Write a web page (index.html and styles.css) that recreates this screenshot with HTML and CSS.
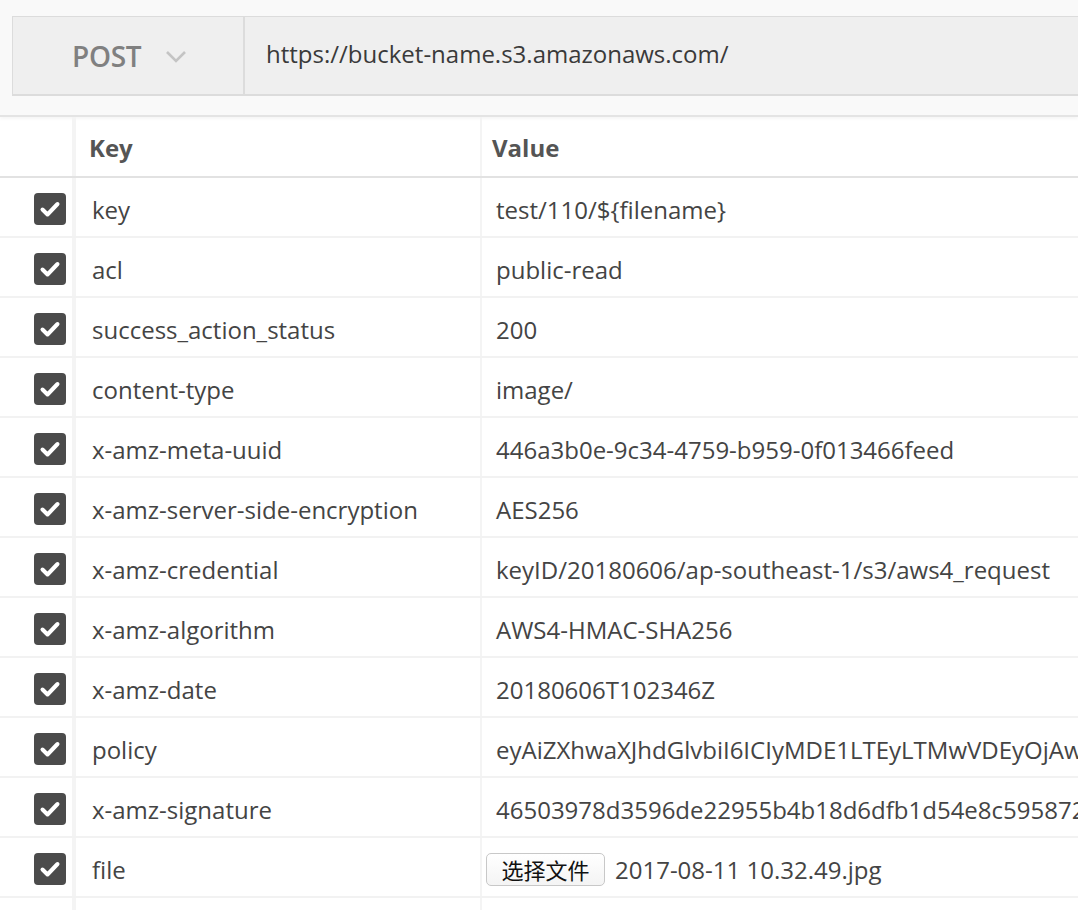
FILE: index.html
```html
<!DOCTYPE html>
<html>
<head>
<meta charset="utf-8">
<link rel="stylesheet" href="styles.css">
</head>
<body>
<div class="topbar">
  <div class="request">
    <div class="method">
      <span class="method-name">POST</span>
      <svg class="chevron" width="22" height="14" viewBox="0 0 22 14"><path d="M2 2 L11 11 L20 2" fill="none" stroke="#c4c4c4" stroke-width="2.6"/></svg>
    </div>
    <div class="url">https://bucket-name.s3.amazonaws.com/</div>
  </div>
</div>
<div class="table">
  <div class="row head">
    <div class="cell check"></div>
    <div class="cell key">Key</div>
    <div class="cell value">Value</div>
  </div>
  <div class="row"><div class="cell check"><span class="cb"><svg viewBox="0 0 32 32"><path d="M8.5 16.5 L13.5 21.5 L23.5 11" /></svg></span></div><div class="cell key">key</div><div class="cell value">test/110/${filename}</div></div>
  <div class="row"><div class="cell check"><span class="cb"><svg viewBox="0 0 32 32"><path d="M8.5 16.5 L13.5 21.5 L23.5 11" /></svg></span></div><div class="cell key">acl</div><div class="cell value">public-read</div></div>
  <div class="row"><div class="cell check"><span class="cb"><svg viewBox="0 0 32 32"><path d="M8.5 16.5 L13.5 21.5 L23.5 11" /></svg></span></div><div class="cell key">success_action_status</div><div class="cell value">200</div></div>
  <div class="row"><div class="cell check"><span class="cb"><svg viewBox="0 0 32 32"><path d="M8.5 16.5 L13.5 21.5 L23.5 11" /></svg></span></div><div class="cell key">content-type</div><div class="cell value">image/</div></div>
  <div class="row"><div class="cell check"><span class="cb"><svg viewBox="0 0 32 32"><path d="M8.5 16.5 L13.5 21.5 L23.5 11" /></svg></span></div><div class="cell key">x-amz-meta-uuid</div><div class="cell value">446a3b0e-9c34-4759-b959-0f013466feed</div></div>
  <div class="row"><div class="cell check"><span class="cb"><svg viewBox="0 0 32 32"><path d="M8.5 16.5 L13.5 21.5 L23.5 11" /></svg></span></div><div class="cell key">x-amz-server-side-encryption</div><div class="cell value">AES256</div></div>
  <div class="row"><div class="cell check"><span class="cb"><svg viewBox="0 0 32 32"><path d="M8.5 16.5 L13.5 21.5 L23.5 11" /></svg></span></div><div class="cell key">x-amz-credential</div><div class="cell value">keyID/20180606/ap-southeast-1/s3/aws4_request</div></div>
  <div class="row"><div class="cell check"><span class="cb"><svg viewBox="0 0 32 32"><path d="M8.5 16.5 L13.5 21.5 L23.5 11" /></svg></span></div><div class="cell key">x-amz-algorithm</div><div class="cell value">AWS4-HMAC-SHA256</div></div>
  <div class="row"><div class="cell check"><span class="cb"><svg viewBox="0 0 32 32"><path d="M8.5 16.5 L13.5 21.5 L23.5 11" /></svg></span></div><div class="cell key">x-amz-date</div><div class="cell value">20180606T102346Z</div></div>
  <div class="row"><div class="cell check"><span class="cb"><svg viewBox="0 0 32 32"><path d="M8.5 16.5 L13.5 21.5 L23.5 11" /></svg></span></div><div class="cell key">policy</div><div class="cell value">eyAiZXhwaXJhdGlvbiI6ICIyMDE1LTEyLTMwVDEyOjAw</div></div>
  <div class="row"><div class="cell check"><span class="cb"><svg viewBox="0 0 32 32"><path d="M8.5 16.5 L13.5 21.5 L23.5 11" /></svg></span></div><div class="cell key">x-amz-signature</div><div class="cell value">46503978d3596de22955b4b18d6dfb1d54e8c595872</div></div>
  <div class="row"><div class="cell check"><span class="cb"><svg viewBox="0 0 32 32"><path d="M8.5 16.5 L13.5 21.5 L23.5 11" /></svg></span></div><div class="cell key">file</div><div class="cell value"><span class="filebtn">选择文件</span><span class="filename">2017-08-11 10.32.49.jpg</span></div></div>
  <div class="row last"><div class="cell check"></div><div class="cell key"></div><div class="cell value"></div></div>
</div>
</body>
</html>
```
FILE: styles.css
```css
html, body {
  margin: 0;
  padding: 0;
  background: #ffffff;
  overflow: hidden;
}
body {
  width: 1078px;
  height: 910px;
  font-family: "Open Sans", "Noto Sans CJK SC", sans-serif;
  color: #444;
}
.topbar {
  background: #f9f9f9;
  height: 117px;
  padding-top: 16px;
  box-sizing: border-box;
  border-bottom: 2px solid #e4e4e4;
  box-shadow: 0 2px 3px rgba(0,0,0,0.04);
  overflow: hidden;
}
.request {
  margin-left: 12px;
  width: 1100px;
  height: 80px;
  box-sizing: border-box;
  border: 1px solid #dcdcdc;
  border-bottom: 2px solid #dcdcdc;
  background: #efefef;
  display: flex;
}
.method {
  width: 232px;
  flex: none;
  border-right: 2px solid #dcdcdc;
  display: flex;
  align-items: center;
  box-sizing: border-box;
  padding-left: 59px;
}
.method-name {
  font-size: 28px;
  font-weight: 600;
  color: #808080;
  letter-spacing: -0.3px;
}
.chevron {
  margin-left: 24px;
  margin-top: 2px;
}
.url {
  display: flex;
  align-items: center;
  padding-left: 21px;
  font-size: 24px;
  color: #3a3a3a;
  padding-bottom: 4px;
}
.table {
  display: flex;
  flex-direction: column;
}
.row {
  display: grid;
  grid-template-columns: 72px 408px 1fr;
  height: 60px;
  flex: none;
  box-sizing: border-box;
  border-bottom: 2px solid #f2f2f2;
}
.row.head {
  height: 61px;
  border-bottom: 2px solid #e2e2e2;
}
.cell {
  display: flex;
  align-items: center;
  white-space: nowrap;
  overflow: hidden;
  font-size: 24px;
  color: #444;
  box-sizing: border-box;
  padding-top: 4px;
}
.cell.check {
  justify-content: flex-end;
  padding-right: 6px;
}
.cell.key {
  border-left: 4px solid #f4f4f4;
  padding-left: 16px;
}
.cell.value {
  border-left: 2px solid #f4f4f4;
  padding-left: 14px;
}
.head .cell {
  font-weight: 700;
  color: #555;
  padding-top: 2px;
}
.head .cell.key {
  padding-left: 13px;
}
.head .cell.value {
  padding-left: 10px;
}
.cb {
  width: 32px;
  height: 32px;
  background: #4b4b4b;
  border-radius: 4px;
  display: block;
}
.cb svg {
  width: 32px;
  height: 32px;
  display: block;
}
.cb path {
  fill: none;
  stroke: #ffffff;
  stroke-width: 4;
  stroke-linecap: round;
  stroke-linejoin: round;
}
.filebtn {
  display: inline-flex;
  align-items: center;
  justify-content: center;
  height: 33px;
  width: 119px;
  box-sizing: border-box;
  border: 1px solid #c8c8c8;
  border-radius: 5px;
  background: linear-gradient(#ffffff, #f4f4f4);
  font-family: "Noto Sans CJK SC", sans-serif;
  font-size: 22px;
  color: #111;
  margin-left: -10px;
  margin-right: 10px;
}
.filename {
  color: #444;
}
```
